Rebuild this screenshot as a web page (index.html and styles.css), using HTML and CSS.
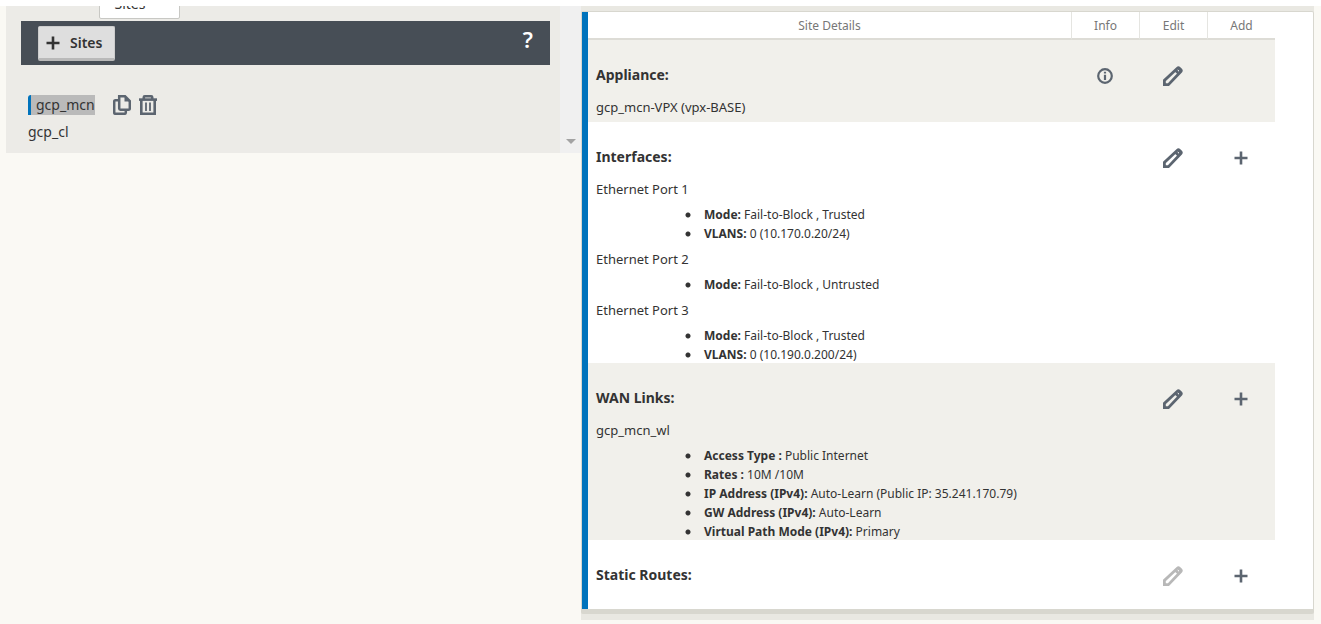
FILE: index.html
```html
<!DOCTYPE html>
<html lang="en">
<head>
<meta charset="utf-8">
<title>Sites</title>
<link rel="stylesheet" href="styles.css">
</head>
<body>
<svg class="defs" width="0" height="0" aria-hidden="true">
  <symbol id="pencil" viewBox="0 0 20 20">
    <path d="M1.4 18.6 V14.4 L14.4 2.2 Q15.4 1.3 16.4 2.2 L17.9 3.7 Q18.7 4.6 17.9 5.5 L5.4 18.6 Z M12.2 4 L16.1 7.8" fill="none" stroke="currentColor" stroke-width="2.8"/>
    <path d="M13 3.2 L15.4 1 L19 4.6 L17 6.9 Z" fill="currentColor"/>
    <path d="M14.8 4 L16 5.2" stroke="#fff" stroke-width="1"/>
  </symbol>
  <symbol id="plus" viewBox="0 0 14 14">
    <path d="M7 .5 V13.5 M.5 7 H13.5" fill="none" stroke="currentColor" stroke-width="2.6"/>
  </symbol>
</svg>
<div class="page">
  <aside class="sidebar">
    <div class="sidebar-body">
      <div class="tabs"><button class="tab" type="button">Sites</button></div>
      <div class="toolbar">
        <button class="add-site" type="button"><svg class="plus" aria-hidden="true"><use href="#plus"/></svg>Sites</button>
        <button class="help" type="button" aria-label="Help">?</button>
      </div>
      <ul class="sites">
        <li class="site">
          <a class="site-link selected" href="#gcp_mcn">gcp_mcn</a>
          <button class="icon-button" type="button" aria-label="Clone site">
            <svg width="18" height="20" viewBox="0 0 18 20" aria-hidden="true" fill="none" stroke="currentColor" stroke-width="2.5"><path d="M6.2 1.2 H12 L16.8 6 V13.6 Q16.8 14.8 15.6 14.8 H7.4 Q6.2 14.8 6.2 13.6 Z"/><path d="M11.5 1 V6.5 H17 Z" fill="currentColor" stroke="none"/><path d="M5 5.2 H2.3 Q1.2 5.2 1.2 6.4 V17.6 Q1.2 18.8 2.4 18.8 H11.6 Q12.8 18.8 12.8 17.6 V15"/></svg>
          </button>
          <button class="icon-button" type="button" aria-label="Delete site">
            <svg width="18" height="20" viewBox="0 0 18 20" aria-hidden="true" fill="none" stroke="currentColor" stroke-width="2.6"><path d="M0 4.6 H18"/><path d="M4.8 4.2 V2.3 Q4.8 1.3 5.8 1.3 H12.2 Q13.2 1.3 13.2 2.3 V4.2"/><path d="M2.3 5 V18.7 H15.7 V5"/><path d="M7 7.5 V16 M11 7.5 V16" stroke-width="1.8"/></svg>
          </button>
        </li>
        <li class="site"><a class="site-link" href="#gcp_cl">gcp_cl</a></li>
      </ul>
    </div>
    <div class="scroll-track"><span class="scroll-arrow"></span></div>
  </aside>
  <main class="details">
    <div class="card">
      <table class="grid">
        <thead>
          <tr><th>Site Details</th><th class="action">Info</th><th class="action">Edit</th><th class="action">Add</th></tr>
        </thead>
        <tbody>
          <tr>
            <td>
              <h2>Appliance:</h2>
              <p>gcp_mcn-VPX (vpx-BASE)</p>
            </td>
            <td class="action"><button class="icon-button" type="button" aria-label="Appliance info"><svg width="16" height="16" viewBox="0 0 16 16" aria-hidden="true"><circle cx="8" cy="8" r="6.8" fill="none" stroke="currentColor" stroke-width="2.2"/><path d="M8 3.8 V5.6 M8 6.8 V12" stroke="currentColor" stroke-width="2.2"/></svg></button></td>
            <td class="action"><button class="icon-button" type="button" aria-label="Edit appliance"><svg class="pencil"><use href="#pencil"/></svg></button></td>
            <td class="action"></td>
          </tr>
          <tr>
            <td>
              <h2>Interfaces:</h2>
              <p>Ethernet Port 1</p>
              <ul>
                <li><b>Mode:</b> Fail-to-Block , Trusted</li>
                <li><b>VLANS:</b> 0 (10.170.0.20/24)</li>
              </ul>
              <p>Ethernet Port 2</p>
              <ul>
                <li><b>Mode:</b> Fail-to-Block , Untrusted</li>
              </ul>
              <p>Ethernet Port 3</p>
              <ul>
                <li><b>Mode:</b> Fail-to-Block , Trusted</li>
                <li><b>VLANS:</b> 0 (10.190.0.200/24)</li>
              </ul>
            </td>
            <td class="action"></td>
            <td class="action"><button class="icon-button" type="button" aria-label="Edit interfaces"><svg class="pencil"><use href="#pencil"/></svg></button></td>
            <td class="action"><button class="icon-button" type="button" aria-label="Add interface"><svg class="plus"><use href="#plus"/></svg></button></td>
          </tr>
          <tr>
            <td>
              <h2>WAN Links:</h2>
              <p>gcp_mcn_wl</p>
              <ul>
                <li><b>Access Type :</b> Public Internet</li>
                <li><b>Rates :</b> 10M /10M</li>
                <li><b>IP Address (IPv4):</b> Auto-Learn (Public IP: 35.241.170.79)</li>
                <li><b>GW Address (IPv4):</b> Auto-Learn</li>
                <li><b>Virtual Path Mode (IPv4):</b> Primary</li>
              </ul>
            </td>
            <td class="action"></td>
            <td class="action"><button class="icon-button" type="button" aria-label="Edit WAN links"><svg class="pencil"><use href="#pencil"/></svg></button></td>
            <td class="action"><button class="icon-button" type="button" aria-label="Add WAN link"><svg class="plus"><use href="#plus"/></svg></button></td>
          </tr>
          <tr class="last">
            <td><h2>Static Routes:</h2></td>
            <td class="action"></td>
            <td class="action"><button class="icon-button" type="button" aria-label="Edit static routes" disabled><svg class="pencil"><use href="#pencil"/></svg></button></td>
            <td class="action"><button class="icon-button" type="button" aria-label="Add static route"><svg class="plus"><use href="#plus"/></svg></button></td>
          </tr>
        </tbody>
      </table>
    </div>
  </main>
</div>
</body>
</html>
```
FILE: styles.css
```css
* { box-sizing: border-box; }
body {
  margin: 0;
  min-height: 100vh;
  border-top: 6px solid #fff;
  background: #faf9f4;
  color: #333;
  font: 13px/19px "Noto Sans", "Open Sans", sans-serif;
}
.defs { position: absolute; }
button { font: inherit; color: inherit; border: 0; padding: 0; background: none; }
ul, p, h2 { margin: 0; padding: 0; }
.page {
  display: grid;
  grid-template-columns: 575fr 733fr;
  align-items: start;
  padding: 0 7px 0 6px;
}

/* Sites sidebar */
.sidebar { display: flex; background: #ecebe7; }
.sidebar-body { flex: 1; padding: 0 10px 8px 15px; }
.tabs { height: 15px; padding-left: 78px; overflow: hidden; }
.tab {
  display: block;
  width: 81px;
  height: 32px;
  margin-top: -19px;
  padding: 0 19px 0 0;
  background: #fff;
  border: 1px solid #c8c8c4;
  border-radius: 2px;
  font-size: 14px;
}
.toolbar {
  display: flex;
  justify-content: space-between;
  align-items: flex-start;
  height: 44px;
  padding: 5px 17px 0;
  background: #474e56;
}
.add-site {
  display: flex;
  align-items: center;
  gap: 10px;
  height: 35px;
  padding: 0 12px 0 7px;
  background: #dedede;
  border: 1px solid #cdcdcd;
  border-bottom: 3px solid #b9b9b9;
  border-radius: 2px;
  font-size: 14px;
  font-weight: 600;
}
.help { color: #fff; font-size: 22px; line-height: 26px; font-weight: 600; }
.sites { list-style: none; padding: 26px 0 0 7px; }
.site { display: flex; align-items: center; gap: 8px; height: 27px; }
.site-link { color: inherit; text-decoration: none; font-size: 14px; line-height: 20px; }
.selected {
  margin-right: 10px;
  padding-left: 5px;
  background: #bababa;
  border-left: 3px solid #0073bc;
  border-radius: 3px 0 0 0;
}
.icon-button { display: inline-flex; color: #5c6570; }
.icon-button:disabled { color: #b8b8b8; }
.pencil { width: 20px; height: 20px; }
.plus { width: 14px; height: 14px; }
.scroll-track {
  display: flex;
  justify-content: center;
  align-items: flex-end;
  width: 21px;
  padding-bottom: 9px;
  background: #f0f0f0;
}
.scroll-arrow {
  border: 5px solid transparent;
  border-top-color: #a3a3a3;
  border-bottom: 0;
}

/* Site details */
.details { padding: 5px 0 6px; background: #e9e8e2; }
.card {
  padding-right: 38px;
  background: #fff;
  border: 1px solid #d8d7cf;
  border-bottom-width: 5px;
  border-radius: 2px;
}
.grid {
  width: 100%;
  border-collapse: separate;
  border-spacing: 0;
  border-left: 6px solid #0073bc;
  table-layout: fixed;
}
.grid th {
  height: 28px;
  padding: 0;
  border-bottom: 2px solid #dddcd6;
  border-left: 1px solid #e5e5e1;
  color: #777;
  font-size: 12px;
  font-weight: 400;
}
.grid th:first-child { border-left: 0; }
.grid td { padding: 0 0 0 8px; vertical-align: top; }
.grid tbody tr:nth-child(odd) { background: #f1f0eb; }
.grid .action { width: 68px; text-align: center; }
.grid td.action { padding: 26px 0 0; }
.grid td.action .icon-button { height: 20px; align-items: center; }
.last td { height: 69px; }
.grid h2 { padding: 25px 0 6px; font-size: 14px; line-height: 20px; font-weight: 700; }
.grid p { padding: 7px 0 6px; }
.grid td > :last-child { margin-bottom: -1px; }
.grid ul { list-style: none; }
.grid li {
  margin-left: 88px;
  padding-left: 20px;
  background: radial-gradient(circle at 4px 10px, #333 2px, transparent 3px);
  font-size: 12px;
}
.grid b { font-weight: 700; }
```
